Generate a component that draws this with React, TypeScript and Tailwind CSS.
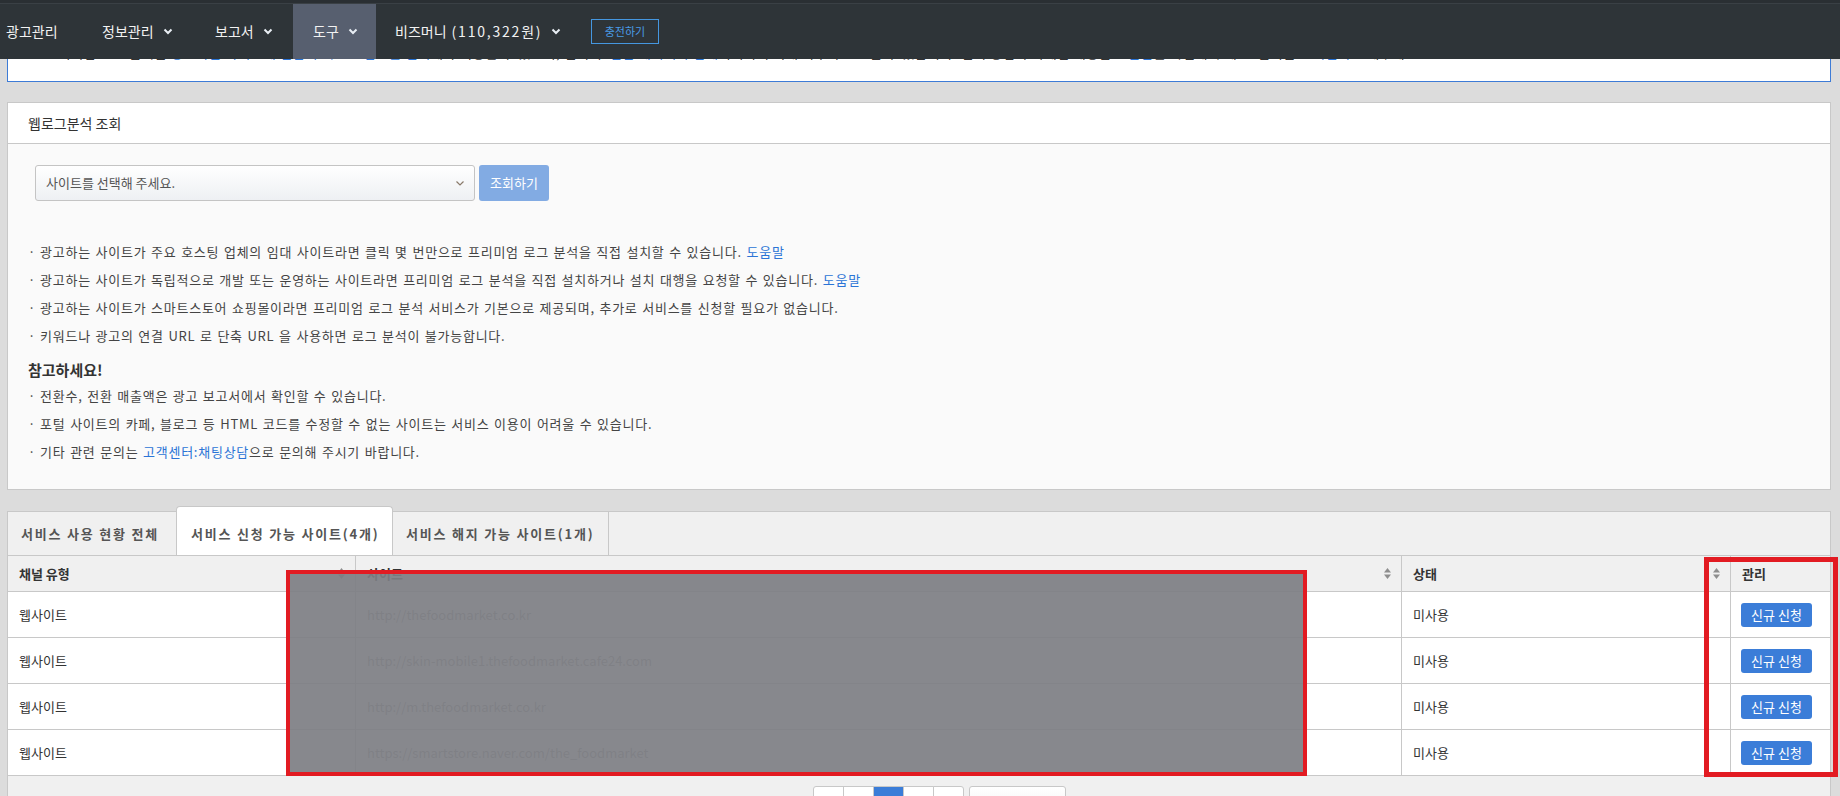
import React from "react";

// 웹로그분석 (tools > web log analysis) page, 1840px wide admin layout.

const NAV = [
  { label: "광고관리", caret: false, w: "w-[82px] pl-[6px]" },
  { label: "정보관리", caret: true, w: "w-[114px] pl-[20px]" },
  { label: "보고서", caret: true, w: "w-[97px] pl-[19px]" },
  { label: "도구", caret: true, w: "w-[83px] pl-[20px]", active: true },
  { label: "비즈머니", suffix: "(110,322원)", caret: true, w: "w-[204px] pl-[19px]" },
];

const SITES = [
  "http://thefoodmarket.co.kr",
  "http://skin-mobile1.thefoodmarket.cafe24.com",
  "http://m.thefoodmarket.co.kr",
  "https://smartstore.naver.com/the_foodmarket",
];

function Caret() {
  return (
    <svg width="10" height="7" viewBox="0 0 10 7" className="ml-[9px] shrink-0">
      <path d="M1.5 1.5 L5 5 L8.5 1.5" fill="none" stroke="#e8eef4" strokeWidth="2" />
    </svg>
  );
}

function SortIcon() {
  return (
    <svg width="7" height="11" viewBox="0 0 7 11" className="shrink-0">
      <path d="M0 4.5 L3.5 0 L7 4.5 Z" fill="#8e8e8e" />
      <path d="M0 6.5 L3.5 11 L7 6.5 Z" fill="#8e8e8e" />
    </svg>
  );
}

function Bullet({ children }: { children: React.ReactNode }) {
  return (
    <p className="h-[28px] whitespace-nowrap leading-[28px]">
      <span className="mr-[4px]">·</span>
      {children}
    </p>
  );
}

function Link({ children }: { children: React.ReactNode }) {
  return <a className="text-[#2b74d6]">{children}</a>;
}

export default function App() {
  return (
    <div className="relative min-h-screen w-[1840px] overflow-hidden bg-[#dcdcdc] font-['Noto_Sans_CJK_KR','Noto_Sans',sans-serif] text-[#333]">
      {/* top navigation */}
      <header className="relative z-10 h-[59px] bg-[#2e3438]">
        <div className="h-[4px] border-b border-[#3a4045] bg-[#2a2f33]" />
        <nav className="flex h-[55px] items-stretch">
          {NAV.map((item) => (
            <a
              key={item.label}
              className={
                "flex shrink-0 items-center whitespace-nowrap text-[14px] text-[#f2f2f2] " +
                item.w +
                (item.active ? " bg-[#575f6f]" : "")
              }
            >
              {item.label}
              {item.suffix ? <span className="ml-[5px] tracking-[1.8px]">{item.suffix}</span> : null}
              {item.caret ? <Caret /> : null}
            </a>
          ))}
          <button
            type="button"
            className="ml-[11px] self-center h-[25px] w-[68px] border border-[#4597e0] text-[11px] leading-none text-[#4a9be6]"
          >
            충전하기
          </button>
        </nav>
      </header>

      <main className="pl-[7px] pr-[9px] pb-[40px]">
        {/* notice box, scrolled under the fixed nav */}
        <div className="-mt-[24px] h-[47px] overflow-hidden whitespace-nowrap border-x border-b border-[#3d7bd6] bg-white pl-[26px] pt-[11px] text-[13px] leading-[14px] tracking-[0.75px]">
          · 프리미엄 로그 분석은 <Link>광고하는 사이트에 전환 추적 스크립트를 설치</Link>해야 이용할 수 있으며, 설치 후{" "}
          <Link>전환 데이터가 집계</Link>되기까지 최대 하루가 소요될 수 있습니다. 설치 방법과 자세한 내용은{" "}
          <Link>도움말</Link>을 확인해 주세요. 문의는 <Link>고객센터</Link>로 해주세요.
        </div>

        {/* search panel */}
        <section className="mt-[20px] border border-[#c8c8c8] bg-[#fafafa]">
          <div className="flex h-[41px] items-center border-b border-[#c8c8c8] bg-white pl-[20px] text-[14px]">
            웹로그분석 조회
          </div>
          <div className="px-[20px] pt-[21px] pb-[23px] text-[13px] text-[#444]">
            <div className="ml-[7px] flex gap-[4px]">
              <div className="flex h-[36px] w-[440px] items-center justify-between rounded-[3px] border border-[#c4c4c4] bg-linear-to-b from-white to-[#eef0f3] pl-[10px] pr-[10px] text-[#555]">
                사이트를 선택해 주세요.
                <svg width="8" height="5" viewBox="0 0 8 5">
                  <path d="M0.5 0.5 L4 4 L7.5 0.5" fill="none" stroke="#8a7a6a" strokeWidth="1.2" />
                </svg>
              </div>
              <button
                type="button"
                className="h-[36px] w-[70px] rounded-[3px] bg-[#82abe3] text-[13px] text-white"
              >
                조회하기
              </button>
            </div>

            <div className="mt-[37px] tracking-[0.75px] [word-spacing:1px]">
              <Bullet>
                광고하는 사이트가 주요 호스팅 업체의 임대 사이트라면 클릭 몇 번만으로 프리미엄 로그 분석을 직접 설치할 수 있습니다.{" "}
                <Link>도움말</Link>
              </Bullet>
              <Bullet>
                광고하는 사이트가 독립적으로 개발 또는 운영하는 사이트라면 프리미엄 로그 분석을 직접 설치하거나 설치 대행을 요청할 수 있습니다.{" "}
                <Link>도움말</Link>
              </Bullet>
              <Bullet>
                광고하는 사이트가 스마트스토어 쇼핑몰이라면 프리미엄 로그 분석 서비스가 기본으로 제공되며, 추가로 서비스를 신청할 필요가 없습니다.
              </Bullet>
              <Bullet>키워드나 광고의 연결 URL 로 단축 URL 을 사용하면 로그 분석이 불가능합니다.</Bullet>

              <h3 className="mt-[8px] h-[24px] text-[15px] font-bold leading-[24px] tracking-normal text-[#333]">참고하세요!</h3>
              <Bullet>전환수, 전환 매출액은 광고 보고서에서 확인할 수 있습니다.</Bullet>
              <Bullet>포털 사이트의 카페, 블로그 등 HTML 코드를 수정할 수 없는 사이트는 서비스 이용이 어려울 수 있습니다.</Bullet>
              <Bullet>
                기타 관련 문의는 <Link>고객센터:채팅상담</Link>으로 문의해 주시기 바랍니다.
              </Bullet>
            </div>
          </div>
        </section>

        {/* tabs + site table */}
        <section className="mt-[21px] border-x border-t border-[#c8c8c8] bg-[#f0f0f0]">
          <div className="flex h-[44px] items-start border-b border-[#c8c8c8] text-[13px] font-bold tracking-[1.8px] text-[#555]">
            <div className="flex h-[43px] w-[168px] shrink-0 items-center pl-[13px] whitespace-nowrap">서비스 사용 현황 전체</div>
            <div className="relative -mt-[6px] flex h-[49px] w-[217px] shrink-0 items-center whitespace-nowrap rounded-t-[4px] border-x border-t border-[#c8c8c8] bg-white pl-[14px] pt-[5px]">
              서비스 신청 가능 사이트(4개)
            </div>
            <div className="flex h-[43px] w-[216px] shrink-0 items-center whitespace-nowrap border-r border-[#c8c8c8] pl-[13px]">
              서비스 해지 가능 사이트(1개)
            </div>
          </div>

          <div className="grid h-[36px] grid-cols-[348px_1046px_329px_1fr] border-b border-[#c8c8c8] text-[13px] font-bold text-[#333]">
            {["채널 유형", "사이트", "상태"].map((h) => (
              <div key={h} className="flex items-center justify-between border-r border-[#c8c8c8] pl-[11px] pr-[10px]">
                {h}
                <SortIcon />
              </div>
            ))}
            <div className="flex items-center pl-[11px]">관리</div>
          </div>

          {SITES.map((url) => (
            <div
              key={url}
              className="grid h-[46px] grid-cols-[348px_1046px_329px_1fr] border-b border-[#c8c8c8] bg-white text-[13px]"
            >
              <div className="flex items-center border-r border-[#c8c8c8] pl-[11px]">웹사이트</div>
              <div className="flex items-center border-r border-[#c8c8c8] pl-[11px] text-[#999]">{url}</div>
              <div className="flex items-center border-r border-[#c8c8c8] pl-[11px]">미사용</div>
              <div className="flex items-center pl-[10px]">
                <button
                  type="button"
                  className="h-[24px] w-[71px] rounded-[3px] bg-[#3b7dd8] text-[13px] text-white"
                >
                  신규 신청
                </button>
              </div>
            </div>
          ))}

          {/* pagination, only its top edge is in view */}
          <div className="flex justify-center pt-[10px] pb-[20px]">
            <div className="ml-[41px] flex gap-[5px]">
              <div className="flex">
                {[0, 1, 2, 3, 4].map((i) => (
                  <span
                    key={i}
                    className={
                      "h-[30px] w-[31px] border border-[#c8c8c8] " +
                      (i === 0 ? "rounded-l-[3px] " : "-ml-px ") +
                      (i === 4 ? "rounded-r-[3px] " : "") +
                      (i === 2 ? "border-[#3b7dd8] bg-[#3b7dd8]" : "bg-white")
                    }
                  />
                ))}
              </div>
              <div className="h-[30px] w-[97px] rounded-[3px] border border-[#c8c8c8] bg-linear-to-b from-white to-[#f2f2f2]" />
            </div>
          </div>
        </section>
      </main>

      {/* redaction / highlight annotations drawn over the screenshot */}
      <div className="absolute left-[286px] top-[570px] h-[206px] w-[1021px] border-4 border-[#e21b22] bg-[rgba(125,126,131,0.92)]" />
      <div className="absolute left-[1704px] top-[557px] h-[220px] w-[134px] border-[5px] border-[#e21b22]" />
    </div>
  );
}
